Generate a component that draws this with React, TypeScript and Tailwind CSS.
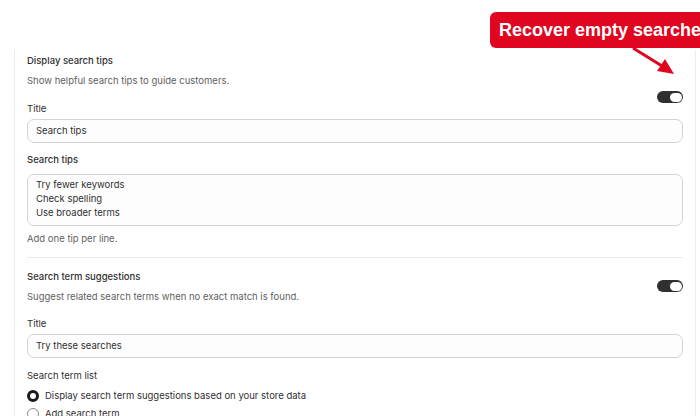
import React from "react";

function Toggle() {
  return (
    <div className="w-[26px] h-[12px] rounded-full bg-[#303030] relative shrink-0">
      <div className="absolute right-[1.5px] top-[1.5px] w-[12px] h-[9px] rounded-full bg-white" />
    </div>
  );
}

const txt = "text-[9.5px] leading-[14px]";

function Input({ value }: { value: string }) {
  return (
    <div className="h-[24px] rounded-[7px] border border-[#d4d4d4] bg-[#fdfdfd] flex items-center px-[8px] text-[9.5px] text-[#303030]">
      {value}
    </div>
  );
}

export default function App() {
  return (
    <div
      className="w-[700px] h-[416px] bg-white relative overflow-hidden"
      style={{ fontFamily: "Inter, 'Noto Sans', sans-serif" }}
    >
      <div className="mt-[50px] ml-[14px] w-[682px] h-[400px] border-x border-[#ececec] px-[12px]">
        {/* Display search tips */}
        <div className="flex justify-between pt-[4px]">
          <div>
            <div className={`${txt} font-medium text-[#303030]`}>Display search tips</div>
            <div className={`mt-[6px] ${txt} text-[#616161]`}>Show helpful search tips to guide customers.</div>
          </div>
          <div className="mt-[37px] h-0">
            <Toggle />
          </div>
        </div>
        <div className="mt-[11px]">
          <div className={`${txt} text-[#303030]`}>Title</div>
          <div className="mt-[3px]">
            <Input value="Search tips" />
          </div>
        </div>
        <div className="mt-[10px]">
          <div className={`${txt} font-medium text-[#303030]`}>Search tips</div>
          <div className={`mt-[7px] h-[52px] rounded-[7px] border border-[#d4d4d4] bg-[#fdfdfd] px-[8px] pt-[3px] ${txt} text-[#303030]`}>
            <div>Try fewer keywords</div>
            <div>Check spelling</div>
            <div>Use broader terms</div>
          </div>
          <div className={`mt-[6px] ${txt} text-[#616161]`}>Add one tip per line.</div>
        </div>
        <div className="mt-[11px] border-t border-[#ebebeb]" />

        {/* Search term suggestions */}
        <div className="flex justify-between mt-[12px]">
          <div>
            <div className={`${txt} font-medium text-[#303030]`}>Search term suggestions</div>
            <div className={`mt-[6px] ${txt} text-[#616161]`}>
              Suggest related search terms when no exact match is found.
            </div>
          </div>
          <div className="mt-[10px]">
            <Toggle />
          </div>
        </div>
        <div className="mt-[13px]">
          <div className={`${txt} text-[#303030]`}>Title</div>
          <div className="mt-[3px]">
            <Input value="Try these searches" />
          </div>
        </div>
        <div className="mt-[11px]">
          <div className={`${txt} text-[#303030]`}>Search term list</div>
          <div className="mt-[6px] flex items-center gap-[6px]">
            <div className="w-[12px] h-[12px] rounded-full border-[3.5px] border-[#1a1a1a] bg-white" />
            <span className={`${txt} text-[#303030]`}>
              Display search term suggestions based on your store data
            </span>
          </div>
          <div className="mt-[4px] flex items-center gap-[6px]">
            <div className="w-[12px] h-[12px] rounded-full border border-[#8a8a8a] bg-white" />
            <span className={`${txt} text-[#303030]`}>Add search term</span>
          </div>
        </div>
      </div>

      {/* Callout */}
      <div className="absolute left-[490px] top-[12px] h-[36px] w-[240px] rounded-[6px] bg-[#e0061f] flex items-center pl-[9px]">
        <span
          className="text-white font-bold text-[18px] whitespace-nowrap"
          style={{ fontFamily: "'Liberation Sans', Arial, sans-serif" }}
        >
          Recover empty searches
        </span>
      </div>
      <svg className="absolute left-0 top-0" width="700" height="416">
        <line x1="633" y1="48" x2="662" y2="66" stroke="#e0061f" strokeWidth="3" />
        <polygon points="674,74 657,71 665,59" fill="#e0061f" />
      </svg>
    </div>
  );
}
